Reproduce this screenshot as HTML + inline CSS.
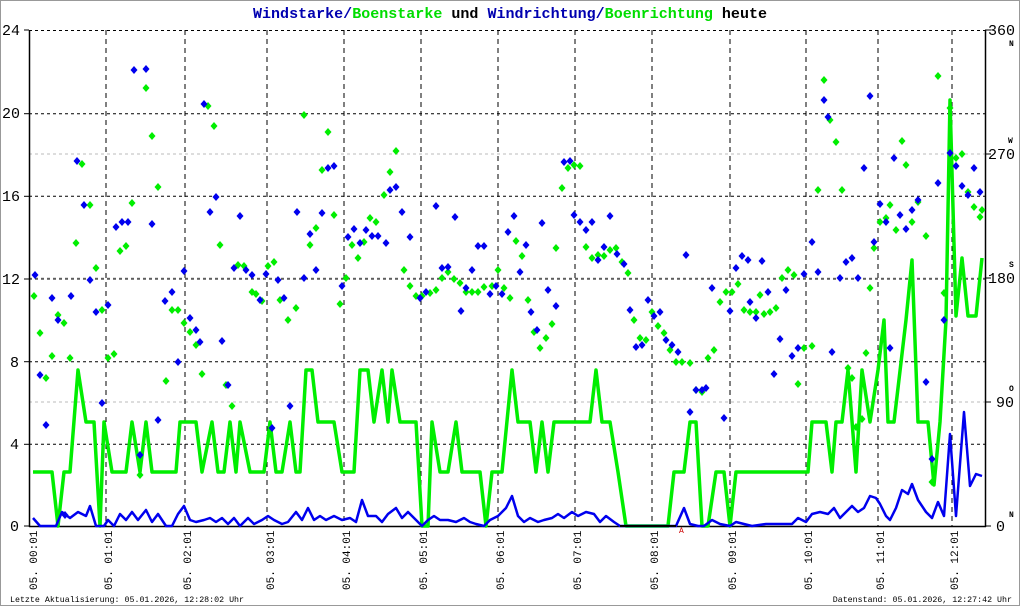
<!DOCTYPE html>
<html><head><meta charset="utf-8"><style>
html,body{margin:0;padding:0;background:#fff}
svg{display:block}
text{font-family:"Liberation Mono","DejaVu Sans Mono",monospace}
</style></head><body>
<svg id="s" width="1020" height="606" viewBox="0 0 1020 606" xmlns="http://www.w3.org/2000/svg">
<rect x="0.5" y="0.5" width="1019" height="605" fill="#fff" stroke="#999" stroke-width="1"/>
<text x="510" y="18" text-anchor="middle" font-size="15" font-weight="bold" textLength="514" lengthAdjust="spacingAndGlyphs"><tspan fill="#0000b0">Windstarke/</tspan><tspan fill="#00dd00">Boenstarke</tspan><tspan fill="#000"> und </tspan><tspan fill="#0000b0">Windrichtung/</tspan><tspan fill="#00dd00">Boenrichtung</tspan><tspan fill="#000"> heute</tspan></text>
<g id="grid"></g>
<g font-family="Liberation Sans,DejaVu Sans,sans-serif" font-size="15" fill="#000">
<text x="2" y="35">24</text><text x="2" y="118">20</text><text x="2" y="201">16</text><text x="2" y="284">12</text><text x="10" y="367">8</text><text x="10" y="449">4</text><text x="10" y="531">0</text>
<text x="988" y="35">360</text><text x="988" y="159">270</text><text x="988" y="283">180</text><text x="996" y="407">90</text><text x="996" y="531">0</text>
</g>
<g font-size="8" font-weight="bold" fill="#000"><text x="1009" y="46">N</text><text x="1008" y="143">W</text><text x="1009" y="267">S</text><text x="1009" y="391">O</text><text x="1009" y="517">N</text></g>
<g id="xl" font-size="11" fill="#000"></g>
<g id="data"></g>
<text x="10" y="602" font-size="8.3" fill="#000">Letzte Aktualisierung: 05.01.2026, 12:28:02 Uhr</text>
<text x="1012" y="602" font-size="8.3" fill="#000" text-anchor="end">Datenstand: 05.01.2026, 12:27:42 Uhr</text>
<text x="679" y="533" font-size="8" fill="#c00">A</text>
</svg>
<script>
var NS="http://www.w3.org/2000/svg",g=document.getElementById('grid'),d=document.getElementById('data'),xl=document.getElementById('xl');
function el(p,t,a){var e=document.createElementNS(NS,t);for(var k in a)e.setAttribute(k,a[k]);p.appendChild(e);return e}
[113.7,196.3,279,361.7,444.3].forEach(function(y){el(g,'line',{x1:29,x2:985,y1:y,y2:y,stroke:'#000','stroke-dasharray':'3,3'})});
el(g,'line',{x1:29,x2:985,y1:30.5,y2:30.5,stroke:'#000','stroke-dasharray':'3,3'});
[154,278,402].forEach(function(y){el(g,'line',{x1:29,x2:985,y1:y,y2:y,stroke:'#bbb','stroke-dasharray':'3,3'})});
var vx=[106,185,267,344,421,498,575,652,730,806,878,952];
vx.forEach(function(x){el(g,'line',{x1:x,x2:x,y1:30,y2:526,stroke:'#000','stroke-dasharray':'5,4'})});
el(g,'line',{x1:29.5,x2:29.5,y1:30,y2:527,stroke:'#000','stroke-width':1.5});
el(g,'line',{x1:985.5,x2:985.5,y1:30,y2:527,stroke:'#000','stroke-width':1.5});
el(g,'line',{x1:29,x2:986,y1:526.5,y2:526.5,stroke:'#000','stroke-width':1.5});
[30,113.7,196.3,279,361.7,444.3,526].forEach(function(y){el(g,'line',{x1:24,x2:29,y1:y,y2:y,stroke:'#000'})});
[30,154,278,402,526].forEach(function(y){el(g,'line',{x1:985,x2:991,y1:y,y2:y,stroke:'#000'})});
var hrs=['00','01','02','03','04','05','06','07','08','09','10','11','12'];
var lx=[33,108,187,270,346,423,500,577,654,732,808,880,954];
lx.forEach(function(x,i){var t=el(xl,'text',{transform:'translate('+(x+4)+',590) rotate(-90)'});t.textContent='05. '+hrs[i]+':01'});
var gl=[[33,472],[52,472],[58,526],[64,472],[70,472],[78,370],[86,422],[94,422],[100,526],[104,422],[112,472],[126,472],[132,422],[140,472],[146,422],[152,472],[176,472],[180,422],[196,422],[202,472],[212,422],[218,472],[224,472],[230,422],[236,472],[240,422],[250,472],[264,472],[270,422],[276,472],[282,472],[290,422],[296,472],[300,472],[306,370],[312,370],[318,422],[334,422],[342,472],[354,472],[360,370],[368,370],[374,422],[382,370],[388,422],[392,370],[400,422],[416,422],[422,526],[428,526],[432,422],[440,472],[448,472],[456,422],[462,472],[480,472],[486,526],[492,472],[502,472],[512,370],[518,422],[530,422],[536,472],[542,422],[548,472],[554,422],[590,422],[596,370],[602,422],[610,422],[618,472],[626,526],[668,526],[674,472],[684,472],[690,422],[696,422],[702,526],[708,526],[716,472],[724,472],[730,526],[736,472],[808,472],[812,422],[826,422],[832,472],[836,422],[842,422],[848,370],[856,472],[862,370],[870,422],[878,370],[884,320],[888,422],[894,422],[906,320],[912,260],[918,422],[928,422],[934,485],[940,422],[946,320],[950,100],[956,316],[962,258],[968,316],[976,316],[982,258]];
el(d,'polyline',{points:gl.join(' '),fill:'none',stroke:'#00ee00','stroke-width':3.5,'stroke-linejoin':'round'});
var bl=[[33,518],[40,526],[48,526],[56,526],[62,512],[70,518],[78,512],[86,516],[90,506],[96,526],[104,526],[108,520],[114,526],[120,514],[126,520],[132,512],[138,520],[146,510],[152,522],[158,514],[166,526],[172,526],[178,514],[184,506],[190,520],[196,522],[204,520],[210,518],[216,522],[222,518],[228,524],[234,518],[240,526],[248,518],[254,524],[262,520],[268,516],[274,520],[282,524],[288,522],[296,512],[302,520],[308,508],[314,520],[320,516],[326,520],[334,516],[342,520],[350,518],[356,522],[362,500],[368,516],[376,516],[382,522],[388,514],[396,508],[402,518],[408,512],[416,520],[422,526],[428,520],[434,516],[440,520],[448,520],[456,522],[464,518],[470,522],[476,524],[484,526],[490,520],[498,516],[506,508],[512,496],[518,516],[524,522],[530,518],[538,522],[544,520],[552,518],[558,514],[564,518],[572,512],[578,516],[586,512],[594,514],[600,522],[606,516],[614,522],[620,526],[676,526],[684,508],[690,524],[698,526],[704,526],[712,520],[720,524],[730,526],[736,522],[744,524],[752,526],[766,524],[780,524],[792,524],[798,518],[806,522],[812,514],[820,512],[828,514],[834,508],[840,518],[846,512],[852,506],[858,512],[864,508],[870,496],[876,498],[880,504],[886,516],[890,520],[896,508],[902,490],[908,494],[912,484],[918,500],[926,512],[932,518],[938,502],[944,516],[950,434],[956,516],[964,412],[970,486],[976,474],[982,476]];
el(d,'polyline',{points:bl.join(' '),fill:'none',stroke:'#0000ee','stroke-width':2.5,'stroke-linejoin':'round'});
el(d,'line',{x1:620,x2:676,y1:526,y2:526,stroke:'#000','stroke-width':2});
function dia(x,y,c){el(d,'polygon',{points:(x)+','+(y-4)+' '+(x+3.5)+','+y+' '+x+','+(y+4)+' '+(x-3.5)+','+y,fill:c})}
var gd=[[34,296],[40,333],[46,378],[52,356],[58,315],[64,323],[70,358],[76,243],[82,164],[90,205],[96,268],[102,310],[108,358],[114,354],[120,251],[126,246],[132,203],[140,475],[146,88],[152,136],[158,187],[166,381],[172,310],[178,310],[184,323],[190,332],[196,345],[202,374],[208,106],[214,126],[220,245],[226,385],[232,406],[238,265],[244,266],[252,292],[256,294],[262,301],[268,266],[274,262],[280,300],[288,320],[296,308],[304,115],[310,245],[316,228],[322,170],[328,132],[334,215],[340,304],[346,278],[352,245],[358,258],[364,242],[370,218],[376,222],[384,195],[390,172],[396,151],[404,270],[410,286],[416,296],[422,296],[430,293],[436,290],[442,278],[448,272],[454,279],[460,283],[466,292],[472,292],[478,292],[484,287],[492,286],[498,270],[504,288],[510,298],[516,241],[522,256],[528,300],[534,332],[540,348],[546,338],[552,324],[556,248],[562,188],[568,168],[574,165],[580,166],[586,247],[592,258],[598,255],[604,256],[610,250],[616,248],[622,262],[628,273],[634,320],[640,338],[646,340],[652,312],[658,326],[664,333],[670,350],[676,362],[682,362],[690,363],[696,390],[702,392],[708,358],[714,350],[720,302],[726,292],[732,292],[738,284],[744,310],[750,312],[756,312],[760,295],[764,314],[770,312],[776,308],[782,278],[788,270],[794,275],[798,384],[804,348],[812,346],[818,190],[824,80],[830,120],[836,142],[842,190],[848,368],[852,378],[856,427],[862,419],[866,353],[870,288],[874,248],[880,222],[886,218],[890,205],[896,230],[902,141],[906,165],[912,222],[918,202],[926,236],[932,482],[938,76],[944,293],[950,108],[956,158],[962,154],[968,192],[974,207],[980,217],[982,210]];
var bd=[[35,275],[40,375],[46,425],[52,298],[58,320],[65,515],[71,296],[77,161],[84,205],[90,280],[96,312],[102,403],[108,305],[116,227],[122,222],[128,222],[134,70],[140,455],[146,69],[152,224],[158,420],[165,301],[172,292],[178,362],[184,271],[190,318],[196,330],[200,342],[204,104],[210,212],[216,197],[222,341],[228,385],[234,268],[240,216],[246,270],[252,275],[260,300],[266,274],[272,428],[278,280],[284,298],[290,406],[297,212],[304,278],[310,234],[316,270],[322,213],[328,168],[334,166],[342,286],[348,237],[354,229],[360,243],[366,230],[372,236],[378,236],[386,243],[390,190],[396,187],[402,212],[410,237],[420,298],[426,292],[436,206],[442,268],[448,267],[455,217],[461,311],[466,288],[472,270],[478,246],[484,246],[490,294],[496,286],[502,294],[508,232],[514,216],[520,272],[526,245],[531,312],[537,330],[542,223],[548,290],[556,306],[564,162],[570,161],[574,215],[580,222],[586,230],[592,222],[598,260],[604,247],[610,216],[617,254],[624,264],[630,310],[636,347],[642,345],[648,300],[654,316],[660,312],[666,340],[672,345],[678,352],[686,255],[690,412],[696,390],[702,390],[706,388],[712,288],[724,418],[730,311],[736,268],[742,256],[748,260],[750,302],[756,318],[762,261],[768,292],[774,374],[780,339],[786,290],[792,356],[798,348],[804,274],[812,242],[818,272],[824,100],[828,117],[832,352],[840,278],[846,262],[852,258],[858,278],[864,168],[870,96],[874,242],[880,204],[886,222],[890,348],[894,158],[900,215],[906,229],[912,210],[918,200],[926,382],[932,459],[938,183],[944,320],[950,153],[956,166],[962,186],[968,195],[974,168],[980,192]];
gd.forEach(function(p){dia(p[0],p[1],'#00ee00')});
bd.forEach(function(p){dia(p[0],p[1],'#0000ee')});
</script>
</body></html>
